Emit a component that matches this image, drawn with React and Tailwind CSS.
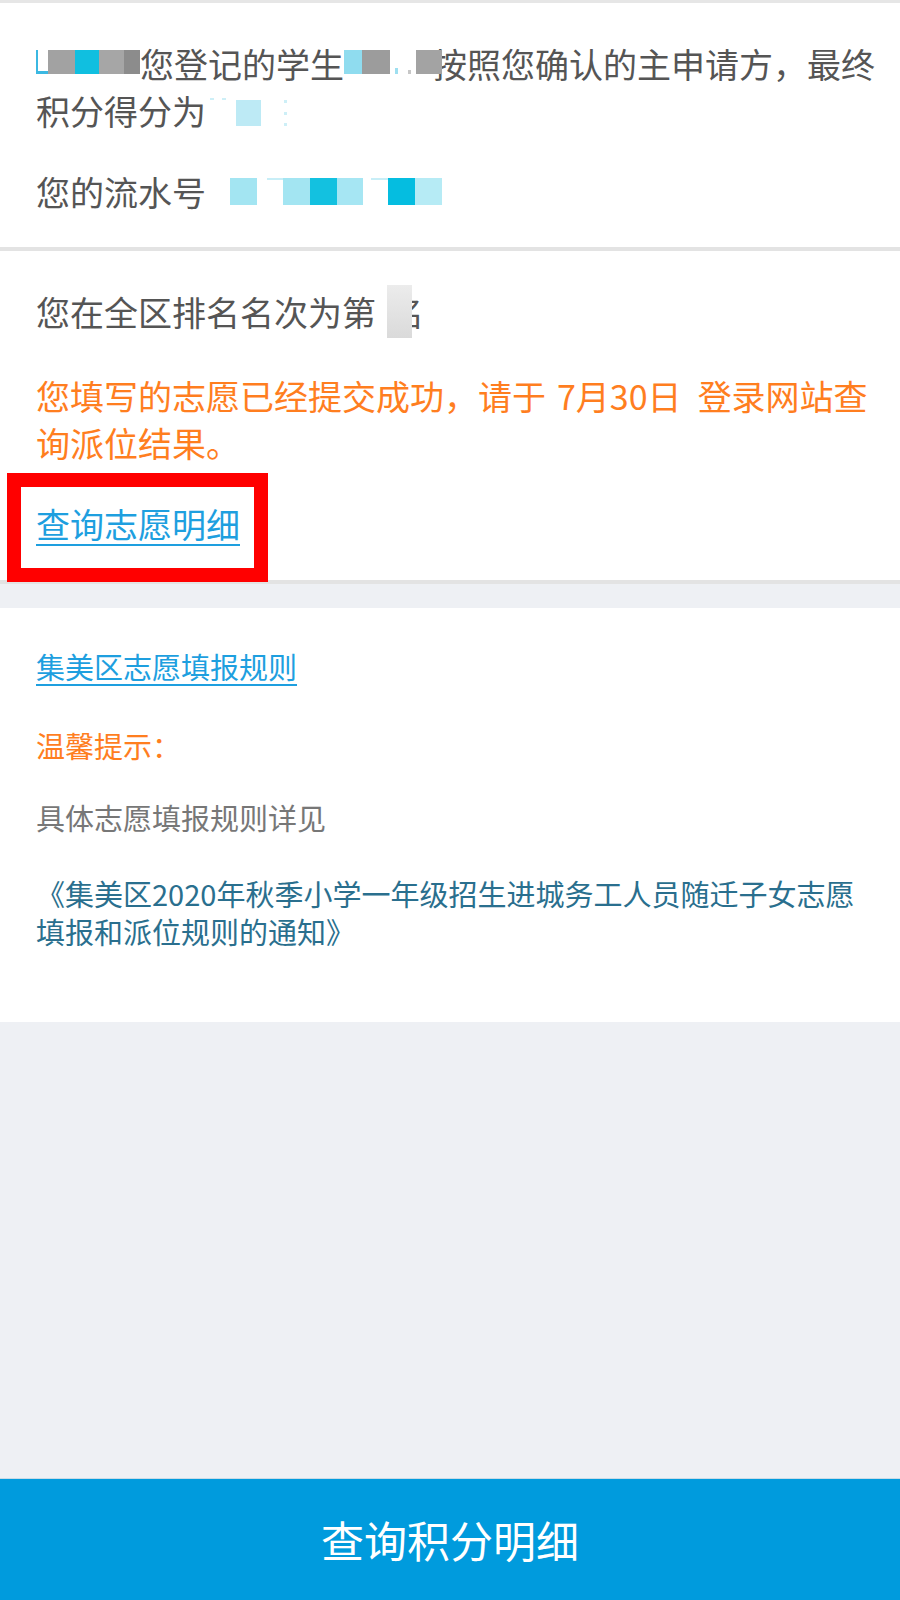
// Score result page: sections separated by grey bars, blue action bar at the bottom.

function NameMosaic() {
  return (
    <span className="inline-flex h-[47px] items-start pt-[10px] align-top">
      <span className="h-[24px] w-[12px] border-b-[3px] border-l-[2px] border-[#3bb8e2]" />
      <span className="h-[24px] w-[27px] bg-[#a2a2a2]" />
      <span className="h-[24px] w-[24px] bg-[#10bfe0]" />
      <span className="h-[24px] w-[25px] bg-[#a6a6a6]" />
      <span className="h-[24px] w-[16px] bg-[#8c8c8c]" />
    </span>
  );
}

function StudentMosaic() {
  return (
    <span className="relative z-10 mr-[-9px] inline-flex h-[47px] items-start pt-[10px] align-top">
      <span className="h-[24px] w-[18px] bg-[#8fdcef]" />
      <span className="h-[24px] w-[28px] bg-[#9c9c9c]" />
      <span className="flex h-[24px] w-[26px] items-end justify-around bg-white">
        <span className="h-[6px] w-[3px] bg-[#9edff0]" />
        <span className="h-[4px] w-[3px] bg-[#c7c7c7]" />
      </span>
      <span className="h-[24px] w-[26px] bg-[#a3a3a3]" />
    </span>
  );
}

function ScoreMosaic() {
  return (
    <span className="inline-flex h-[47px] items-start pt-[13px] align-top">
      <span className="ml-[4px] mt-[-2px] h-[2px] w-[4px] bg-[#cdeff7]" />
      <span className="ml-[8px] mt-[-2px] h-[2px] w-[4px] bg-[#cdeff7]" />
      <span className="ml-[10px] h-[26px] w-[25px] bg-[#bdeaf5]" />
      <span className="ml-[23px] flex h-[26px] w-[3px] flex-col justify-between">
        <span className="h-[3px] w-[3px] bg-[#cdeff7]" />
        <span className="h-[3px] w-[3px] bg-[#cdeff7]" />
        <span className="h-[3px] w-[3px] bg-[#cdeff7]" />
      </span>
    </span>
  );
}

function SerialMosaic() {
  return (
    <span className="ml-[24px] inline-flex h-[47px] items-start pt-[10px] align-top">
      <span className="h-[27px] w-[27px] bg-[#a3e5f2]" />
      <span className="h-[27px] w-[26px]">
        <span className="ml-[10px] block h-[2px] w-[16px] bg-[#c8eef7]" />
      </span>
      <span className="h-[27px] w-[27px] bg-[#a3e5f2]" />
      <span className="h-[27px] w-[27px] bg-[#13c1e0]" />
      <span className="h-[27px] w-[26px] bg-[#a6e6f3]" />
      <span className="h-[27px] w-[25px]">
        <span className="ml-[8px] block h-[2px] w-[17px] bg-[#c8eef7]" />
      </span>
      <span className="h-[27px] w-[27px] bg-[#05bde0]" />
      <span className="h-[27px] w-[27px] bg-[#b6ebf5]" />
    </span>
  );
}

export default function App() {
  return (
    <div className="flex h-[1600px] w-full flex-col bg-[#eef0f4] font-['Noto_Sans_CJK_SC',sans-serif]">
      <div className="h-[3px] bg-[#e6e6e6]" />

      <section className="bg-white pb-[32px] pl-[36px] pr-[12px] pt-[37px] text-[34px] leading-[47px] text-[#555]">
        <p>
          <NameMosaic />
          您登记的学生
          <StudentMosaic />
          按照您确认的主申请方，最终
          <br />
          积分得分为
          <ScoreMosaic />
        </p>
        <p className="mt-[34px]">
          您的流水号
          <SerialMosaic />
        </p>
      </section>
      <div className="h-[4px] bg-[#e3e3e3]" />

      <div className="relative">
        <section className="bg-white pb-[33px] pl-[36px] pr-[12px] pt-[37px] text-[34px] leading-[47px]">
          <p className="text-[#555]">
            您在全区排名名次为第
            <span className="relative inline-block h-[47px] w-[14px] align-top">
              <span className="absolute left-[11px] top-[-3px] z-10 h-[53px] w-[25px] bg-gradient-to-b from-[#ececec] to-[#dadada]" />
            </span>
            名
          </p>
          <p className="mt-[37px] text-[#ff7e1f]">
            您填写的志愿已经提交成功，请于
            <span className="ml-[11px]">7月30日</span>
            <span className="ml-[16px]">登录网站查</span>
            <br />
            询派位结果。
          </p>
          <p className="mt-[34px]">
            <a href="#" className="text-[#1e9fdf] underline decoration-2 underline-offset-[6px]">
              查询志愿明细
            </a>
          </p>
        </section>
        <div className="h-[4px] bg-[#e3e3e3]" />
        <div className="pointer-events-none absolute left-[7px] top-[222px] h-[109px] w-[261px] border-[14px] border-[#ff0000]" />
      </div>
      <div className="h-[24px]" />

      <section className="bg-white pb-[72px] pl-[36px] pr-[12px] pt-[39px] text-[29px] leading-[38px]">
        <p>
          <a href="#" className="text-[#1e9fdf] underline decoration-2 underline-offset-[5px]">
            集美区志愿填报规则
          </a>
        </p>
        <p className="mt-[41px] text-[#ff7e1f]">温馨提示：</p>
        <p className="mt-[34px] text-[#777]">具体志愿填报规则详见</p>
        <p className="mt-[38px] text-[#2a6f8e]">
          《集美区2020年秋季小学一年级招生进城务工人员随迁子女志愿
          <br />
          填报和派位规则的通知》
        </p>
      </section>

      <div className="flex-1" />

      <button
        type="button"
        className="flex h-[122px] w-full items-center justify-center border-t border-[#c8dbe6] bg-[#009bdd] text-[43px] text-white"
      >
        查询积分明细
      </button>
    </div>
  );
}
